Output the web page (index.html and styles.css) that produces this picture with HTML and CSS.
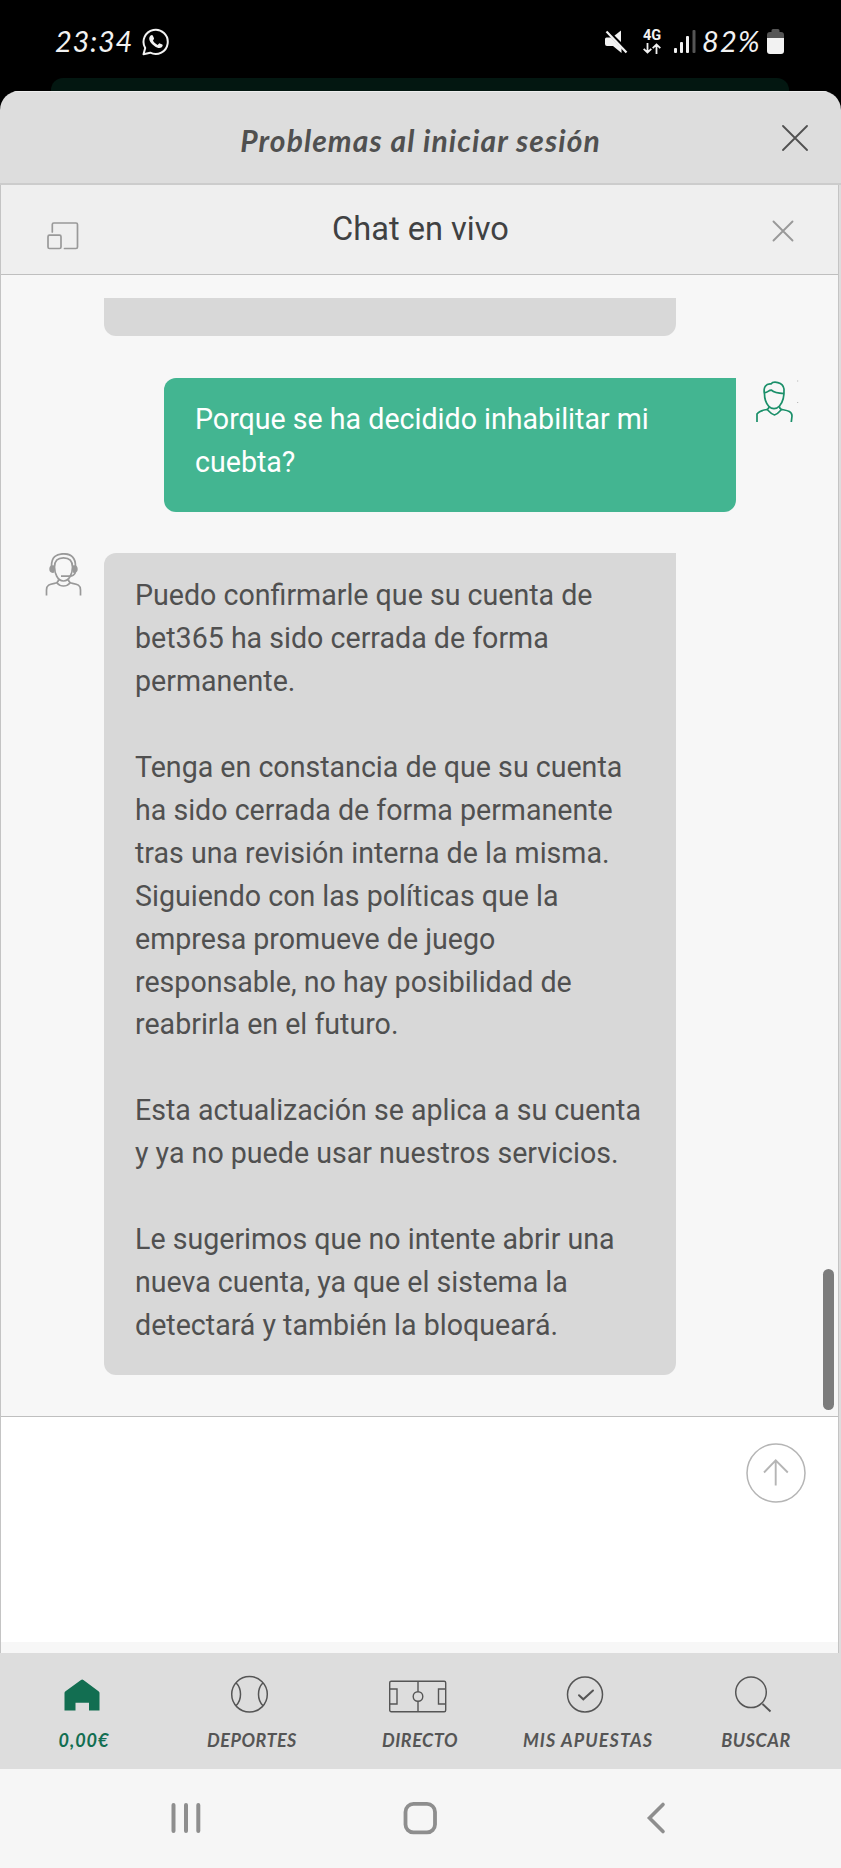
FILE: index.html
```
<!DOCTYPE html>
<html lang="es">
<head>
  <meta charset="UTF-8">
  <meta name="viewport" content="width=device-width, initial-scale=1.0">
  <title>Problemas al iniciar sesión</title>
  <link rel="stylesheet" href="styles.css">
</head>
<body>

<!-- Status bar -->
<div class="status-bar">
  <span class="time">23:34</span>
  <svg class="whatsapp" width="28" height="28" viewBox="0 0 28 28" fill="none">
    <path d="M1.5 26.2 3.2 20A12.1 12.1 0 1 1 8.2 24.7Z" stroke="#f2f2f2" stroke-width="2" stroke-linejoin="round"/>
    <path d="M8.600 7.600c1-.9 2-.7 2.400.3l1 2.400c.3.7-.8 1.700-1 2.200.9 2 2.500 3.500 4.700 4.400.6-.4 1.300-1.800 2.100-1.500l2.500 1.200c.8.5.3 2-.6 2.700-1.800 1.300-4.300.9-7.300-1.300C8.700 15.400 7 12.200 7.200 10.200c.1-1 .6-1.900 1.400-2.600Z" fill="#f2f2f2"/>
  </svg>
  <div class="status-icons">
    <svg class="mute" width="24" height="24" viewBox="0 0 24 24">
      <path d="M10 6 17 .5V14Z" fill="#f2f2f2"/>
      <path d="M1 9q0-1.500 1.500-1.500H7L17.500 18v5L9 16H3q-2 0-2-2Z" fill="#f2f2f2"/>
      <path d="M3.500 0 24 20.500" stroke="#000" stroke-width="2"/>
      <path d="M2.500 1.500 22.500 22.500" stroke="#f2f2f2" stroke-width="2.200"/>
    </svg>
    <div class="network">
      <span>4G</span>
      <svg width="18" height="11" viewBox="0 0 18 11" fill="none" stroke="#f2f2f2" stroke-width="1.800">
        <path d="M4.500 0v9.500M.7 5.800l3.800 3.800 3.800-3.800M13.500 11V1.500M9.700 5.200l3.800-3.800 3.800 3.800"/>
      </svg>
    </div>
    <svg class="signal" width="22" height="24" viewBox="0 0 22 24">
      <rect x="0" y="18" width="3" height="5" rx="1" fill="#f2f2f2"/>
      <rect x="6" y="12" width="3" height="11" rx="1" fill="#f2f2f2"/>
      <rect x="12" y="6" width="3" height="17" rx="1" fill="#f2f2f2"/>
      <rect x="18.500" y="0" width="3" height="23" rx="1" fill="#555"/>
    </svg>
    <span class="percent">82%</span>
    <svg class="battery" width="17" height="26" viewBox="0 0 17 26">
      <path d="M0 9V6q0-3 3-3h1.500V1.500Q4.500 0 6 0h5q1.500 0 1.500 1.500V3H14q3 0 3 3v3Z" fill="#555"/>
      <path d="M0 9h17v13q0 3-3 3H3q-3 0-3-3Z" fill="#f2f2f2"/>
    </svg>
  </div>
</div>
<div class="back-card"></div>

<div class="sheet">
  <header class="sheet-header">
    <h1>Problemas al iniciar sesión</h1>
    <svg class="sheet-close" width="26" height="26" viewBox="0 0 26 26" fill="none" stroke="#505050" stroke-width="1.800" stroke-linecap="round">
      <path d="M1 1l24 24M25 1L1 25"/>
    </svg>
  </header>

  <div class="chat">
    <div class="chat-header">
      <svg class="resize" width="32" height="28" viewBox="0 0 32 28" fill="none" stroke="#999" stroke-width="1.700" stroke-linecap="round">
        <path d="M5.300 10V2.500q0-1.500 1.500-1.500H29q1.500 0 1.500 1.500V25q0 1.500-1.500 1.500H17.500"/>
        <rect x="1" y="13.200" width="13" height="13.300" rx="1.500"/>
      </svg>
      <h2>Chat en vivo</h2>
      <svg class="chat-close" width="22" height="22" viewBox="0 0 22 22" fill="none" stroke="#999" stroke-width="1.900" stroke-linecap="round">
        <path d="M1.500 1.500l19 19M20.500 1.500l-19 19"/>
      </svg>
    </div>

    <!-- Messages -->
    <div class="messages">
      <div class="bubble agent cut"></div>

      <div class="row user-row">
        <div class="bubble user">Porque se ha decidido inhabilitar mi<br>cuebta?</div>
        <svg class="avatar" width="44" height="44" viewBox="0 0 44 44" fill="none" stroke="#1a8f69" stroke-width="1.700" stroke-linejoin="round">
          <path d="M8.500 14C7 7 10 3.500 15 4c2-3 12-2.500 13 5 .4 7-1 13-4.500 17-3 3.500-8 3.500-11 0C10 23 8.500 18.500 8.500 14Z"/>
          <path d="M8.500 12.500c3 .5 4-2.500 7-2.300 2 2 7 3.200 12.500 3.500"/>
          <path d="M13 26.500c0 2-1 2.700-2.500 3-4 .7-7.500 1.500-9.500 4.500V42M23.500 26.500c0 2 1 2.700 2.500 3 5 1 10 1.500 10 6.500l-.7 6M11 29.500c2 1 3 4.500 7.500 5.500 4-1 5.500-4.500 7-5.500"/>
          <path d="M41 1h1.200M41 22.500h1.200" stroke="#bbb" stroke-width="1.200"/>
        </svg>
      </div>

      <div class="row">
        <svg class="avatar" width="38" height="44" viewBox="0 0 38 44" fill="none" stroke="#999" stroke-width="1.700">
          <path d="M6.500 13C6.500 4.500 11 .8 18.500 .8S30.500 4.500 30.500 13M9.500 14C9.500 7.500 13 4.800 18.500 4.800S27.500 7.500 27.500 14c0 6-3 14-9 14s-9-8-9-14Z"/>
          <path d="M9 12.500v7.300c-3.200.5-4.700-.8-4.700-3.700s1.500-4.200 4.700-3.600ZM28 12.500v7.300c3.200.5 4.700-.8 4.700-3.700s-1.500-4.200-4.700-3.600Z" fill="#999" stroke="none"/>
          <path d="M30.500 19c-1 3.500-3 4.200-6 4.200h-8.500M13.500 26.500c0 3-2 3.500-4 3.900C4.500 31.300 1.500 32 1.500 37v5.500M23.500 26.500c0 3 2 3.500 4 3.900 5 .9 8 1.600 8 6.600v5.500M12 30c3.500 4 9.500 4 13 0"/>
        </svg>
        <div class="bubble agent">
          <p>Puedo confirmarle que su cuenta de<br>bet365 ha sido cerrada de forma<br>permanente.</p>
          <p>Tenga en constancia de que su cuenta<br>ha sido cerrada de forma permanente<br>tras una revisión interna de la misma.<br>Siguiendo con las políticas que la<br>empresa promueve de juego<br>responsable, no hay posibilidad de<br>reabrirla en el futuro.</p>
          <p>Esta actualización se aplica a su cuenta<br>y ya no puede usar nuestros servicios.</p>
          <p>Le sugerimos que no intente abrir una<br>nueva cuenta, ya que el sistema la<br>detectará y también la bloqueará.</p>
        </div>
      </div>
      <div class="scroll-thumb"></div>
    </div>

    <div class="composer">
      <svg class="send" width="60" height="60" viewBox="0 0 60 60" fill="none" stroke="#b5b5b5" stroke-width="1.500">
        <circle cx="30" cy="30" r="29"/>
        <path d="M29.700 42.500V17M18 29.500 29.700 17.300 41.800 29.500" stroke-width="1.900"/>
      </svg>
    </div>
  </div>
</div>

<!-- Tab bar -->
<nav class="tabs">
  <a class="tab active">
    <svg width="60" height="40" viewBox="0 0 60 40">
      <path d="M10.500 35.500V18q0-1.200 1-1.800L27 5q1.200-.8 2.400 0L44.500 16.200q1 .6 1 1.800v17.500H35v-7.700H21.500v7.700Z" fill="#126e51"/>
    </svg>
    <span class="balance">0,00€</span>
  </a>
  <a class="tab">
    <svg width="60" height="40" viewBox="0 0 60 40" fill="none" stroke="#555" stroke-width="1.500">
      <circle cx="28.500" cy="19.300" r="17.800"/>
      <path d="M15 7.800c6 6 6 17 0 23M42 7.800c-6 6-6 17 0 23"/>
    </svg>
    <span>DEPORTES</span>
  </a>
  <a class="tab">
    <svg width="60" height="40" viewBox="0 0 60 40" fill="none" stroke="#555" stroke-width="1.400">
      <rect x="0.700" y="6.200" width="56" height="30.500" rx="1.500"/>
      <path d="M1 14h7v15H1M56.500 14h-7v15h7M29 6.500v10M29 26.500v10"/>
      <circle cx="29" cy="21.500" r="4.800"/>
    </svg>
    <span>DIRECTO</span>
  </a>
  <a class="tab">
    <svg width="60" height="40" viewBox="0 0 60 40" fill="none" stroke="#555" stroke-width="1.500">
      <circle cx="28" cy="19.500" r="17.500"/>
      <path d="M22 20.300l4.300 4L36 15.500" stroke-width="2" stroke-linecap="round"/>
    </svg>
    <span class="bets">MIS APUESTAS</span>
  </a>
  <a class="tab">
    <svg width="60" height="40" viewBox="0 0 60 40" fill="none" stroke="#555" stroke-width="1.500">
      <circle cx="26" cy="17.300" r="15.300"/>
      <path d="M37.500 29l8 7.500" stroke-width="1.900"/>
    </svg>
    <span>BUSCAR</span>
  </a>
</nav>

<!-- Android navigation -->
<div class="system-nav">
  <svg width="32" height="34" viewBox="0 0 32 34" stroke="#8e8e8e" stroke-width="4" stroke-linecap="round">
    <path d="M3.500 4v26M16 4v26M28.300 4v26"/>
  </svg>
  <svg class="home" width="34" height="34" viewBox="0 0 34 34" fill="none" stroke="#8e8e8e" stroke-width="3.800">
    <rect x="2.500" y="2.900" width="29.500" height="28.500" rx="8"/>
  </svg>
  <svg width="20" height="34" viewBox="0 0 20 34" fill="none" stroke="#8e8e8e" stroke-width="3.600" stroke-linecap="round">
    <path d="M17 3.500 3.500 17 17 30.500"/>
  </svg>
</div>

</body>
</html>
```
FILE: styles.css
```
* {
  box-sizing: border-box;
}
body {
  margin: 0;
  width: 841px;
  height: 1868px;
  overflow: hidden;
  background-color: #000;
  font-family: Roboto, sans-serif;
}
svg {
  display: block;
  flex: none;
}
h1, h2, p {
  margin: 0;
  font-weight: 400;
}

/* Status bar */
.status-bar {
  display: flex;
  height: 78px;
  padding: 28px 57px 0 55px;
  color: #f2f2f2;
  font-family: Lato, sans-serif;
  font-style: italic;
  font-size: 29px;
  line-height: 26px;
}
.time {
  width: 87px;
  letter-spacing: 0.7px;
}
.status-icons {
  display: flex;
  margin-left: auto;
}
.mute {
  margin: 2px 15px 0 0;
}
.network {
  width: 20px;
  margin-right: 11px;
  font: 700 14.5px/15px Roboto, sans-serif;
}
.network span {
  display: block;
}
.signal {
  margin-top: 2px;
}
.percent {
  width: 65px;
  margin-left: 6px;
  letter-spacing: 1.2px;
  white-space: nowrap;
}
.battery {
  margin-top: 1px;
}
.back-card {
  height: 13px;
  margin: 0 52px 0 51px;
  background-color: #031711;
  border-radius: 12px 12px 0 0;
}

/* Sheet */
.sheet {
  height: 1562px;
  background-color: #ddd;
  border-radius: 19px 19px 0 0;
  overflow: hidden;
}
.sheet-header {
  display: flex;
  align-items: center;
  height: 94px;
  padding: 0 33px 0 59px;
  border-top: 1px solid #eee;
  border-bottom: 2px solid #ccc;
}
.sheet-header h1 {
  flex: 1;
  padding-top: 4px;
  color: #505050;
  font-family: Lato, sans-serif;
  font-style: italic;
  font-weight: 700;
  font-size: 30px;
  line-height: 40px;
  letter-spacing: 1.1px;
  text-align: center;
}
.chat {
  width: 839px;
  height: 1468px;
  background-color: #f7f7f7;
  border-left: 1px solid #c4c4c4;
  border-right: 1px solid #c4c4c4;
}
.chat-header {
  display: flex;
  align-items: center;
  height: 90px;
  padding: 0 44px 0 46px;
  background-color: #efefef;
  border-bottom: 1px solid #bfbfbf;
}
.resize {
  margin-top: 12px;
}
.chat-header h2 {
  flex: 1;
  padding: 0 10px 1px 0;
  color: #404142;
  font-size: 32.6px;
  line-height: 40px;
  text-align: center;
}
.chat-close {
  margin-top: 2px;
}
.messages {
  position: relative;
  height: 1141px;
  padding: 23px 0 0 43px;
}
.row {
  display: flex;
  align-items: flex-start;
  gap: 21px;
}
.row .avatar:first-child {
  margin-left: 1px;
}
.bubble {
  width: 572px;
  padding: 21.4px 30px 28.4px 31px;
  font-size: 28.6px;
  line-height: 42.9px;
  white-space: nowrap;
}
.agent {
  color: #505050;
  background-color: #d8d8d8;
  border-radius: 12px 0 12px 12px;
}
.agent p + p {
  margin-top: 42.9px;
}
.cut {
  height: 38px;
  margin-left: 60px;
  padding: 0;
  border-radius: 0 0 12px 12px;
}
.user-row {
  margin: 42px 0 41px 120px;
  gap: 20px;
}
.user-row .avatar {
  margin-top: 2px;
}
.user {
  height: 134px;
  padding-top: 20.4px;
  color: #fff;
  background-color: #43b591;
  border-radius: 12px 0 12px 12px;
}
.scroll-thumb {
  position: absolute;
  right: 4px;
  bottom: 6px;
  width: 11px;
  height: 141px;
  background-color: #7c7c7c;
  border-radius: 6px;
}
.composer {
  display: flex;
  justify-content: flex-end;
  height: 226px;
  padding: 26px 32px 0;
  background-color: #fff;
  border-top: 1px solid #bfbfbf;
}

/* Tab bar */
.tabs {
  display: grid;
  grid-template-columns: repeat(5, 168px);
  height: 116px;
  padding-top: 22px;
  background-color: #ddd;
}
.tab {
  display: flex;
  flex-direction: column;
  align-items: center;
  color: #555;
  font-family: Lato, sans-serif;
  font-style: italic;
  font-weight: 700;
  font-size: 18px;
  line-height: 24px;
  letter-spacing: 0.5px;
}
.tab svg {
  margin-left: -2px;
}
.tab.active svg {
  margin-left: 0;
}
.tab span {
  margin-top: 13px;
}
.tab .bets {
  letter-spacing: 1.1px;
}
.tab .balance {
  letter-spacing: 1px;
}
.active {
  color: #126e51;
}

/* Android navigation */
.system-nav {
  display: flex;
  justify-content: space-between;
  height: 99px;
  padding: 32px 175px 0 170px;
  background-color: #f6f6f6;
}
.home {
  margin: 0 4px 0 -4px;
}
```
